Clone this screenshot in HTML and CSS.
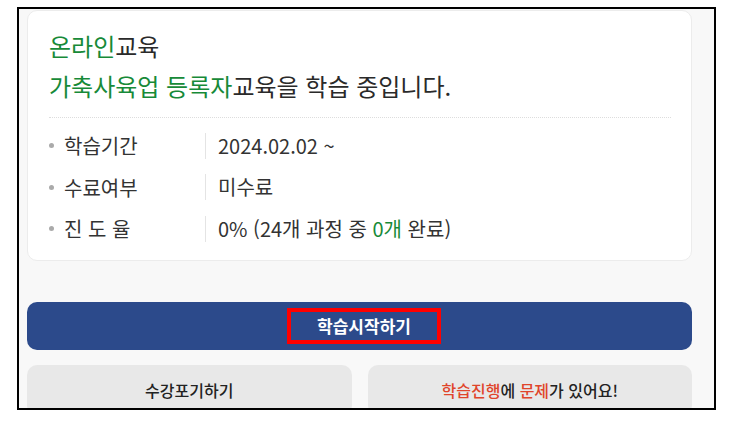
FILE: index.html
```html
<!DOCTYPE html>
<html lang="ko">
<head>
    <meta charset="UTF-8">
    <meta name="viewport" content="width=device-width, initial-scale=1.0">
    <title>학습현황</title>
    <link rel="stylesheet" href="styles.css">
</head>
<body>
    <div class="frame">
        <div class="card">
            <h2 class="title">
                <span class="green">온라인</span>교육<br>
                <span class="green">가축사육업 등록자</span>교육을 학습 중입니다.
            </h2>
            <ul class="info">
                <li><span class="label">학습기간</span><span class="value">2024.02.02 ~</span></li>
                <li><span class="label">수료여부</span><span class="value">미수료</span></li>
                <li><span class="label">진 도 율</span><span class="value">0% (24개 과정 중 <span class="green">0개</span> 완료)</span></li>
            </ul>
        </div>
        <button class="start"><span class="mark">학습시작하기</span></button>
        <div class="sub-buttons">
            <button class="sub">수강포기하기</button>
            <button class="sub"><span class="red">학습진행</span>에 <span class="red">문제</span>가 있어요!</button>
        </div>
    </div>
</body>
</html>
```

FILE: styles.css
```css
body {
    margin: 0;
    background-color: #ffffff;
    font-family: "Noto Sans CJK KR", "Noto Sans", sans-serif;
    color: #333333;
}
.frame {
    box-sizing: border-box;
    width: 699px;
    height: 403px;
    margin: 7px 0 0 17px;
    padding: 1px 22px 0 8px;
    border: 2px solid #000000;
    background-color: #f8f8f8;
    overflow: hidden; /* buttons run past the bottom edge */
}
.card {
    box-sizing: border-box;
    height: 251px;
    padding: 15px 20px 0 21px;
    background-color: #ffffff;
    border: 1px solid #ececec;
    border-radius: 10px;
}
.title {
    margin: 0;
    padding-bottom: 11px;
    font-size: 24px;
    font-weight: 400;
    line-height: 40px;
    color: #2a2a2a;
    border-bottom: 1px dotted #dddddd;
}
.green {
    color: #178a38;
}
.info {
    list-style: none;
    margin: 0;
    padding: 7px 0 0 0;
}
.info li {
    display: flex;
    align-items: center;
    height: 41.5px;
    font-size: 20px;
}
.info li::before {
    content: '';
    width: 5px;
    height: 5px;
    margin: 0 10px 0 0;
    border-radius: 50%;
    background-color: #aaaaaa;
}
.label {
    width: 141px;
}
.value {
    padding-left: 12px;
    border-left: 1px solid #e4e4e4;
    line-height: 26px;
}
button {
    font-family: inherit;
    border: none;
    cursor: pointer;
}
.start {
    display: flex;
    justify-content: center;
    align-items: center;
    width: 100%;
    height: 48px;
    margin-top: 41px;
    background-color: #2c4a8b;
    color: #ffffff;
    font-size: 17px;
    font-weight: 700;
    border-radius: 10px;
}
.mark {
    margin-left: 9px;
    padding: 2px 26px;
    line-height: 24px;
    border: 4px solid #ff0000;
}
.sub-buttons {
    display: flex;
    gap: 16px;
    margin-top: 15px;
}
.sub {
    flex: 1;
    height: 50px;
    background-color: #e8e8e8;
    color: #222222;
    font-size: 16px;
    font-weight: 500;
    border-radius: 10px;
}
.red {
    color: #e0452b;
}
```
